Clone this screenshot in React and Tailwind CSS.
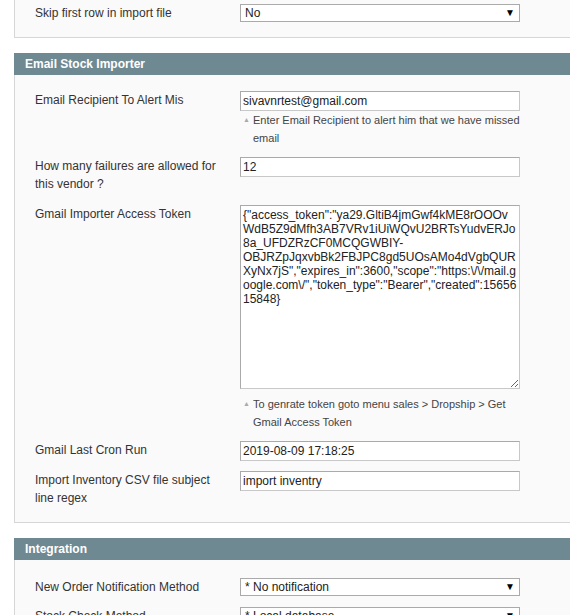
import React from 'react';

const token =
  '{"access_token":"ya29.GltiB4jmGwf4kME8rOOOvWdB5Z9dMfh3AB7VRv1iUiWQvU2BRTsYudvERJo8a_UFDZRzCF0MCQGWBIY-OBJRZpJqxvbBk2FBJPC8gd5UOsAMo4dVgbQURXyNx7jS","expires_in":3600,"scope":"https:\\/\\/mail.google.com\\/","token_type":"Bearer","created":1565615848}';

function Header({ title }) {
  return (
    <div className="h-[22px] bg-[#6f8992] pl-[11px] text-[12px] font-bold leading-[22px] text-white">
      {title}
    </div>
  );
}

function Label({ children }) {
  return <div className="w-[205px] shrink-0 pr-[10px] leading-[18px] text-[#333]">{children}</div>;
}

function TextInput({ value }) {
  return (
    <input
      type="text"
      defaultValue={value}
      className="block h-[20px] w-[280px] border border-[#aaa] border-r-[#c8c8c8] border-b-[#c8c8c8] bg-white px-[2px] text-[12px] text-[#222] outline-none"
    />
  );
}

function Select({ value }) {
  return (
    <div className="relative h-[18px] w-[280px]">
      <select
        defaultValue={value}
        className="block h-[18px] w-[280px] appearance-none border border-[#aaa] bg-white pl-[4px] text-[12px] leading-[16px] text-[#222] outline-none"
      >
        <option>{value}</option>
      </select>
      <span className="pointer-events-none absolute right-[5px] top-[3px] text-[10px] leading-[12px] text-black">▼</span>
    </div>
  );
}

function Note({ children }) {
  return (
    <div className="flex w-[280px] pl-[3px] text-[11px] leading-[18px] text-[#444]">
      <span className="w-[10px] shrink-0 text-[7px] text-[#aaa]">▲</span>
      <span>{children}</span>
    </div>
  );
}

export default function App() {
  return (
    <div
      className="h-[615px] w-[570px] overflow-hidden bg-white text-[12px]"
      style={{ fontFamily: '"Liberation Sans", Arial, sans-serif' }}
    >
      <div className="pl-[14px]">
        {/* previous section, cut off at top */}
        <div className="w-[600px] border-b border-l border-[#d6d6d6] bg-[#fafafa] pb-[14px] pl-[20px] pt-[3px]">
          <div className="flex h-[20px] items-center">
            <Label>Skip first row in import file</Label>
            <Select value="No" />
          </div>
        </div>

        <div className="mt-[15px] w-[600px]">
          <Header title="Email Stock Importer" />
          <div className="flex flex-col gap-[10px] border-b border-l border-[#d6d6d6] bg-[#fafafa] pb-[15px] pl-[20px] pt-[16px]">
            <div className="flex items-start">
              <Label>Email Recipient To Alert Mis</Label>
              <div>
                <TextInput value="sivavnrtest@gmail.com" />
                <Note>Enter Email Recipient to alert him that we have missed email</Note>
              </div>
            </div>
            <div className="flex items-start">
              <Label>How many failures are allowed for this vendor ?</Label>
              <TextInput value="12" />
            </div>
            <div className="mt-[2px] flex items-start">
              <Label>Gmail Importer Access Token</Label>
              <div>
                <textarea
                  defaultValue={token}
                  className="block h-[184px] w-[280px] border border-[#aaa] border-r-[#c8c8c8] border-b-[#c8c8c8] bg-white px-[2px] py-[2px] text-[12px] leading-[14px] text-[#222] outline-none"
                />
                <div className="mt-[6px]">
                  <Note>To genrate token goto menu sales &gt; Dropship &gt; Get Gmail Access Token</Note>
                </div>
              </div>
            </div>
            <div className="flex items-start">
              <Label>Gmail Last Cron Run</Label>
              <TextInput value="2019-08-09 17:18:25" />
            </div>
            <div className="flex items-start">
              <Label>Import Inventory CSV file subject line regex</Label>
              <TextInput value="import inventry" />
            </div>
          </div>
        </div>

        <div className="mt-[15px] w-[600px]">
          <Header title="Integration" />
          <div className="flex flex-col gap-[9px] border-l border-[#d6d6d6] bg-[#fafafa] pb-[15px] pl-[20px] pt-[17px]">
            <div className="flex h-[20px] items-center">
              <Label>New Order Notification Method</Label>
              <Select value="* No notification" />
            </div>
            <div className="flex h-[20px] items-center">
              <Label>Stock Check Method</Label>
              <Select value="* Local database" />
            </div>
          </div>
        </div>
      </div>
    </div>
  );
}
